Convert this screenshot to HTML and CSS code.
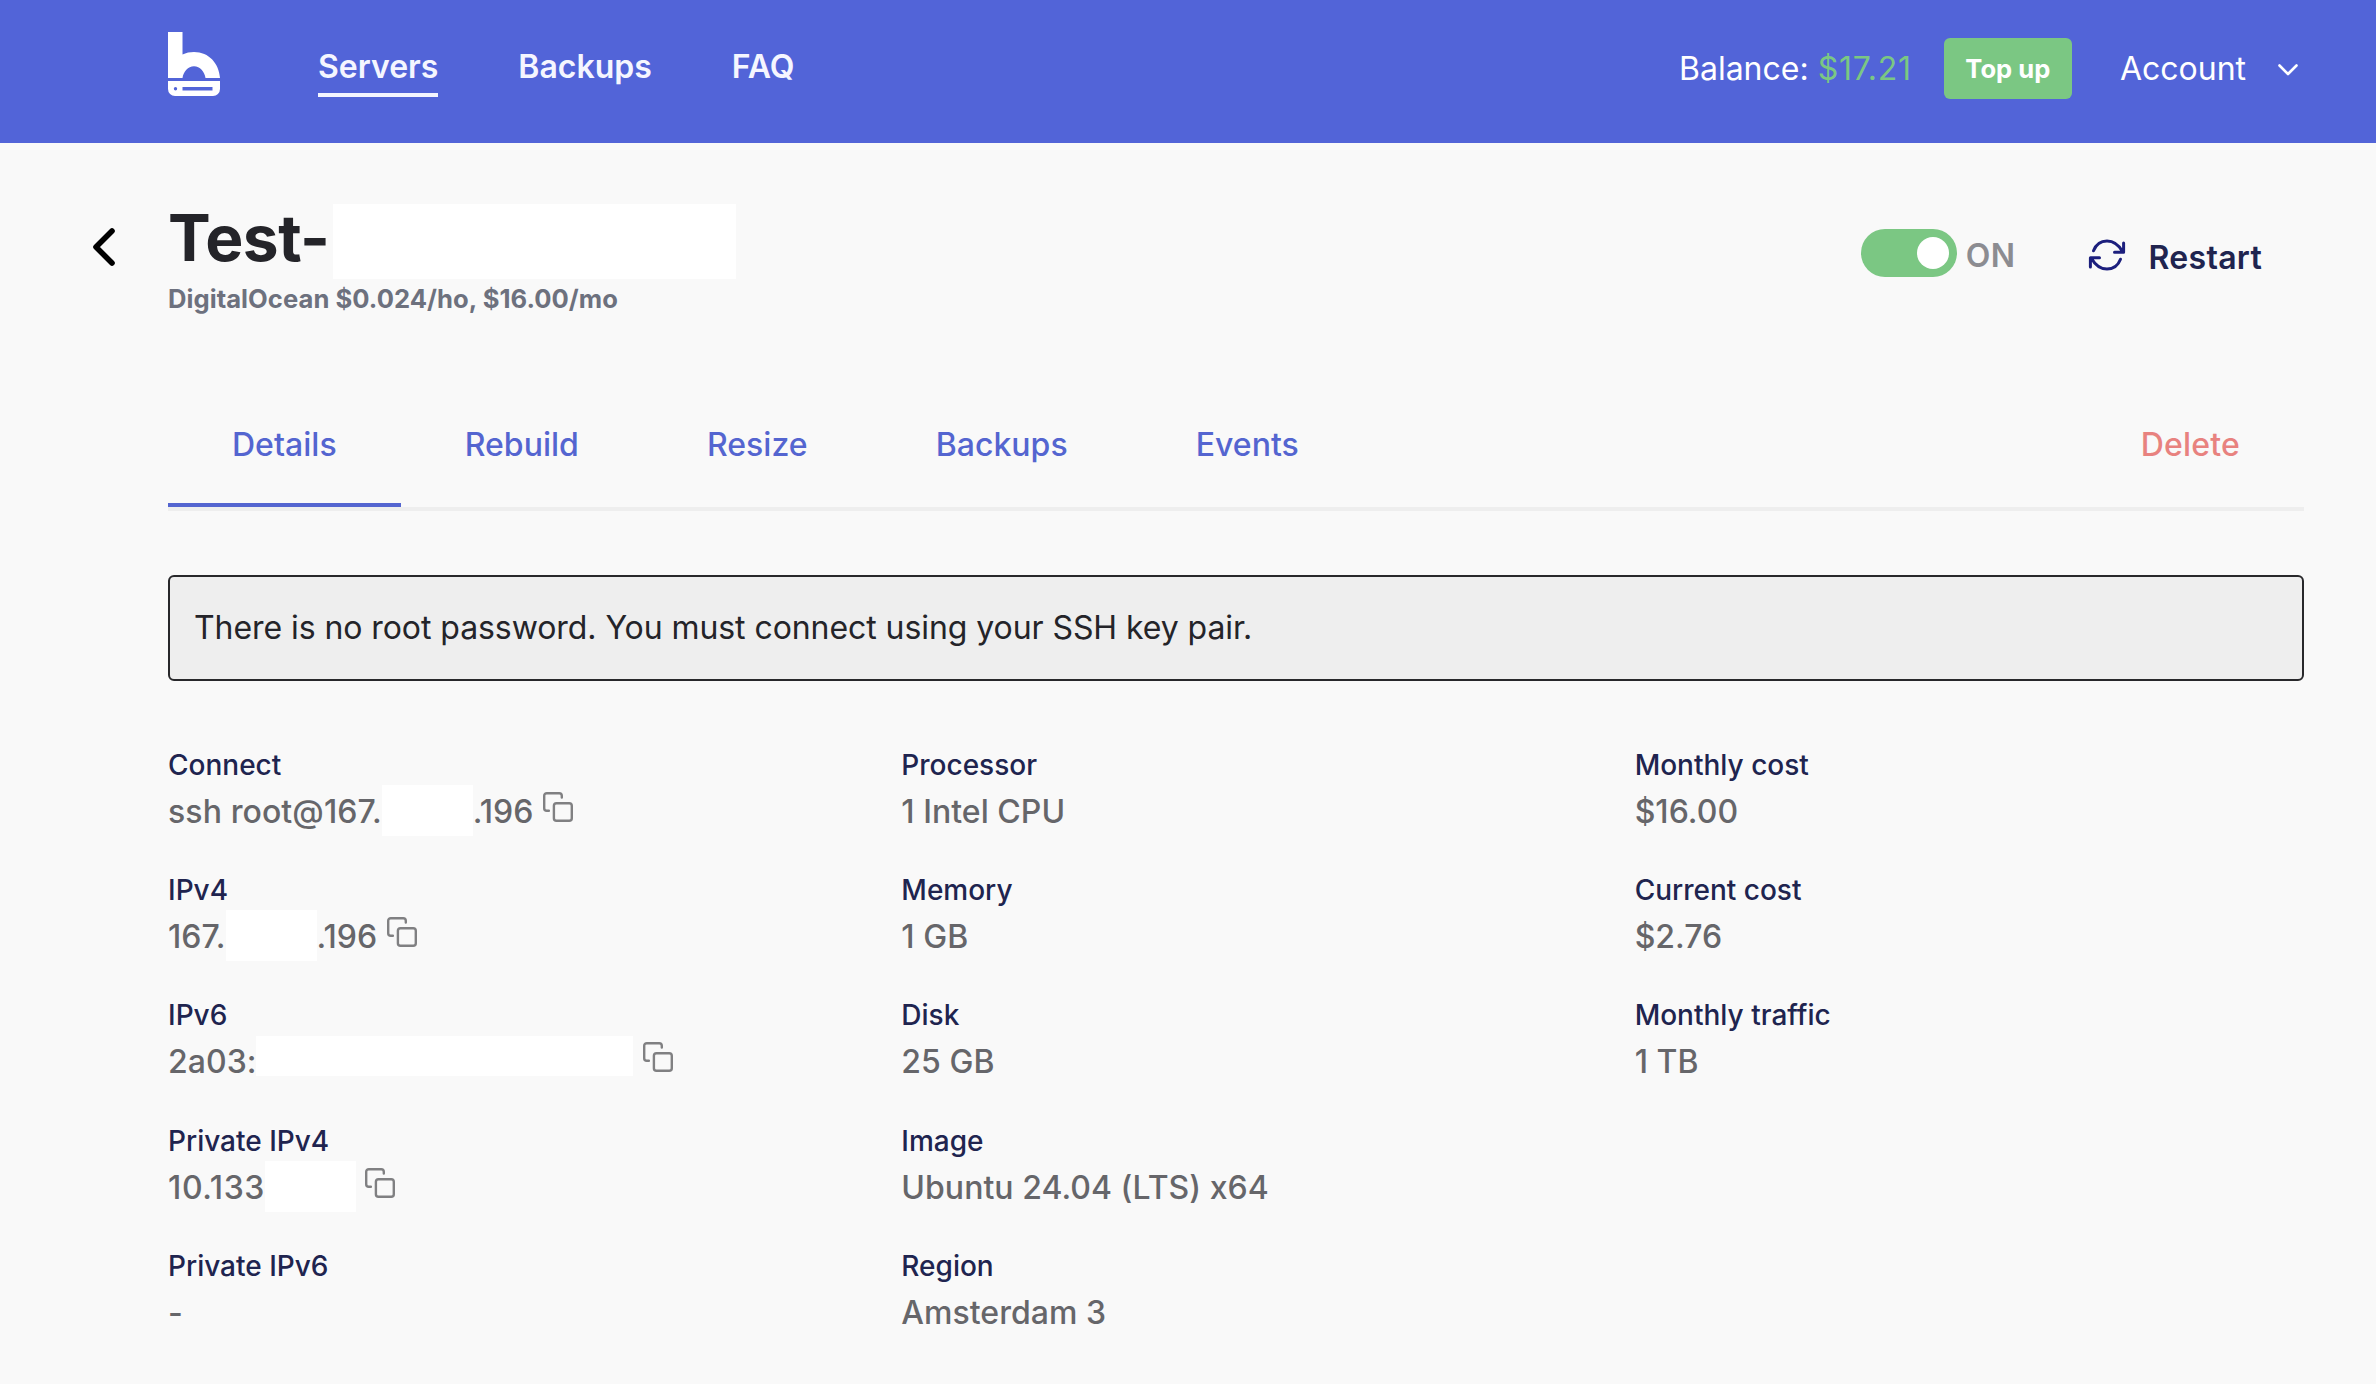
FILE: index.html
```html
<!DOCTYPE html>
<html lang="en">
<head>
<meta charset="utf-8">
<title>Server details</title>
<link rel="stylesheet" href="styles.css">
</head>
<body>
<svg class="defs" aria-hidden="true">
  <symbol id="copy" viewBox="0 0 30 30">
    <rect x="10.9" y="11.2" width="17.9" height="17.6" rx="2.6"/>
    <path d="M5.9 18.8H3.8A2.6 2.6 0 0 1 1.2 16.200V3.8A2.600 2.600 0 0 1 3.800 1.200H16.200A2.600 2.600 0 0 1 18.800 3.800V5.600"/>
  </symbol>
</svg>
<header class="topbar">
  <a class="logo"><svg width="52" height="64" viewBox="0 0 52 64">
    <path fill="#fff" d="M0 0H14.500V22.500C18 20.800 22 20 26 20C41 20 51 31.500 52 46H37.500C36.500 39.500 32 34.300 26 34.300S15.500 39.500 14.500 46H0Z"/>
    <path fill="#fff" fill-rule="evenodd" d="M0 49H52V57A7 7 0 0 1 45 64H7A7 7 0 0 1 0 57ZM7.500 55A1.700 1.700 0 1 0 7.500 58.400A1.700 1.700 0 1 0 7.500 55ZM14.500 55V58.400H44.500V55Z"/>
  </svg></a>
  <nav class="nav">
    <a class="nav-link active">Servers</a>
    <a class="nav-link">Backups</a>
    <a class="nav-link">FAQ</a>
  </nav>
  <div class="balance">Balance: <span class="amount">$17.21</span></div>
  <button class="topup">Top up</button>
  <div class="account">Account
    <svg width="22" height="14" viewBox="0 0 22 14"><path d="M2.500 2.500L11 11L19.500 2.500" fill="none" stroke="#fff" stroke-width="2.600" stroke-linecap="round" stroke-linejoin="round"/></svg>
  </div>
</header>
<section class="server">
  <svg class="back" width="24" height="40" viewBox="0 0 24 40"><path d="M20 4L4 20L20 36" fill="none" stroke="#000" stroke-width="5.600" stroke-linecap="round" stroke-linejoin="round"/></svg>
  <div class="title">
    <h1>Test-<span class="mask mask-name"></span></h1>
    <p>DigitalOcean $0.024/ho, $16.00/mo</p>
  </div>
  <div class="switch"><span class="knob"></span></div>
  <span class="state">ON</span>
  <a class="restart">
    <svg width="38" height="32" viewBox="0 0 38 32" fill="none" stroke="#1c1f7d" stroke-width="3" stroke-linecap="round" stroke-linejoin="round">
      <path d="M5.500 11.800C8 5.300 13 2 19 2C25.500 2 30.500 5.500 34.500 12.500M35.600 4V13.200H26.500"/>
      <path d="M32.500 20.200C30 26.700 25 30 19 30C12.500 30 7.500 26.500 3.500 19.500M2.400 28V18.800H11.500"/>
    </svg>
    Restart</a>
</section>
<main class="content">
  <div class="tabs">
    <a class="tab current">Details</a><a class="tab">Rebuild</a><a class="tab">Resize</a><a class="tab">Backups</a><a class="tab">Events</a><a class="tab delete">Delete</a>
  </div>
  <div class="notice">There is no root password. You must connect using your SSH key pair.</div>
  <div class="details">
    <dl>
      <div class="item"><dt>Connect</dt><dd class="connect">ssh root@167.<span class="mask mask-ip"></span>.196<svg class="copy"><use href="#copy"/></svg></dd></div>
      <div class="item"><dt>IPv4</dt><dd>167.<span class="mask mask-ip"></span>.196<svg class="copy"><use href="#copy"/></svg></dd></div>
      <div class="item"><dt>IPv6</dt><dd>2a03:<span class="mask mask-ipv6"></span><svg class="copy"><use href="#copy"/></svg></dd></div>
      <div class="item"><dt>Private IPv4</dt><dd class="private">10.133<span class="mask mask-ip"></span><svg class="copy"><use href="#copy"/></svg></dd></div>
      <div class="item"><dt>Private IPv6</dt><dd>-</dd></div>
    </dl>
    <dl>
      <div class="item"><dt>Processor</dt><dd>1 Intel CPU</dd></div>
      <div class="item"><dt>Memory</dt><dd>1 GB</dd></div>
      <div class="item"><dt>Disk</dt><dd>25 GB</dd></div>
      <div class="item"><dt>Image</dt><dd>Ubuntu 24.04 (LTS) x64</dd></div>
      <div class="item"><dt>Region</dt><dd>Amsterdam 3</dd></div>
    </dl>
    <dl>
      <div class="item"><dt>Monthly cost</dt><dd>$16.00</dd></div>
      <div class="item"><dt>Current cost</dt><dd>$2.76</dd></div>
      <div class="item"><dt>Monthly traffic</dt><dd>1 TB</dd></div>
    </dl>
  </div>
</main>
</body>
</html>
```
FILE: styles.css
```css
* { box-sizing: border-box; }
body {
  margin: 0;
  background: #f9f9f9;
  color: #242429;
  font: 400 32px/40px Inter, sans-serif;
  overflow: hidden;
}
h1, p, dl, dd { margin: 0; }
svg { display: block; flex: none; }
.defs { display: none; }

.topbar {
  display: flex;
  align-items: flex-start;
  height: 143px;
  padding: 0 77px 0 168px;
  background: #5264d8;
  color: #fff;
}
.logo { margin-top: 32px; }
.nav { display: flex; gap: 80px; margin: 47px auto 0 98px; font-weight: 600; }
.nav-link { padding-bottom: 6px; border-bottom: 4px solid transparent; color: #f5f6ff; }
.nav-link.active { border-color: #f3f5ff; }
.balance { margin: 49px 32px 0 0; white-space: nowrap; }
.amount { color: #7bc783; letter-spacing: 0.8px; }
.topup {
  width: 128px;
  height: 61px;
  margin: 38px 48px 0 0;
  padding: 0;
  border: 0;
  border-radius: 6px;
  background: #7bc783;
  color: #fff;
  font: 700 25.6px/32px Inter, sans-serif;
}
.account { display: flex; gap: 31px; margin-top: 49px; }
.account svg { margin-top: 14px; }

.server { display: flex; align-items: flex-start; height: 237px; padding: 0 114px 0 92px; }
.back { margin-top: 84px; }
.title { margin: 55px auto 0 52px; }
h1 { display: flex; height: 80px; font-size: 64px; line-height: 80px; font-weight: 700; letter-spacing: -0.5px; }
.title p { margin-top: 5px; color: #6d717e; font-size: 25.6px; line-height: 32px; font-weight: 700; letter-spacing: 0.04px; }
.mask { flex: none; background: #fff; }
.mask-name { width: 403px; height: 75px; margin: 6px 0 0 3px; }
.switch {
  display: flex;
  justify-content: flex-end;
  width: 96px;
  height: 48px;
  margin-top: 86px;
  padding: 8px;
  border-radius: 24px;
  background: #7bc783;
}
.knob { width: 32px; height: 32px; border-radius: 50%; background: #fff; }
.state { margin: 93px 72px 0 9px; color: #8c8c91; font-weight: 600; letter-spacing: 0.5px; }
.restart { display: flex; gap: 23px; margin-top: 95px; color: #20244f; font-weight: 600; letter-spacing: 0.3px; }
.restart svg { margin-top: 1px; }

.content { padding: 0 72px 0 168px; }
.tabs { display: flex; height: 131px; border-bottom: 4px solid #eee; }
.tab { padding: 45px 64px 0; border-bottom: 4px solid transparent; color: #5465d0; font-weight: 500; letter-spacing: 0.03px; }
.tab.current { border-color: #5465d0; }
.tab.delete { margin-left: auto; color: #e8827f; letter-spacing: 0.2px; }
.notice {
  height: 106px;
  margin-top: 64px;
  padding: 31px 24px;
  border: 2px solid #28282b;
  border-radius: 6px;
  background: #eee;
  letter-spacing: -0.07px;
}
.details { display: grid; grid-template-columns: repeat(3, 1fr); column-gap: 64px; margin-top: 67px; }
dl { display: grid; grid-auto-rows: 125.2px; align-content: start; }
dt { color: #20244f; font-size: 28px; line-height: 34px; font-weight: 500; }
dd { display: flex; align-items: flex-start; height: 40px; margin-top: 10px; color: #66666a; font-weight: 500; letter-spacing: 0.03px; }
.connect { letter-spacing: 0.1px; }
.private { letter-spacing: 0.6px; }
.mask-ip { width: 91px; height: 51px; margin-top: -7px; }
.mask-ipv6 { width: 377px; height: 40px; margin-top: -6px; }
.copy { width: 30px; height: 30px; margin: 0 0 0 9.5px; fill: none; stroke: #808082; stroke-width: 2.4; stroke-linecap: round; }
```
